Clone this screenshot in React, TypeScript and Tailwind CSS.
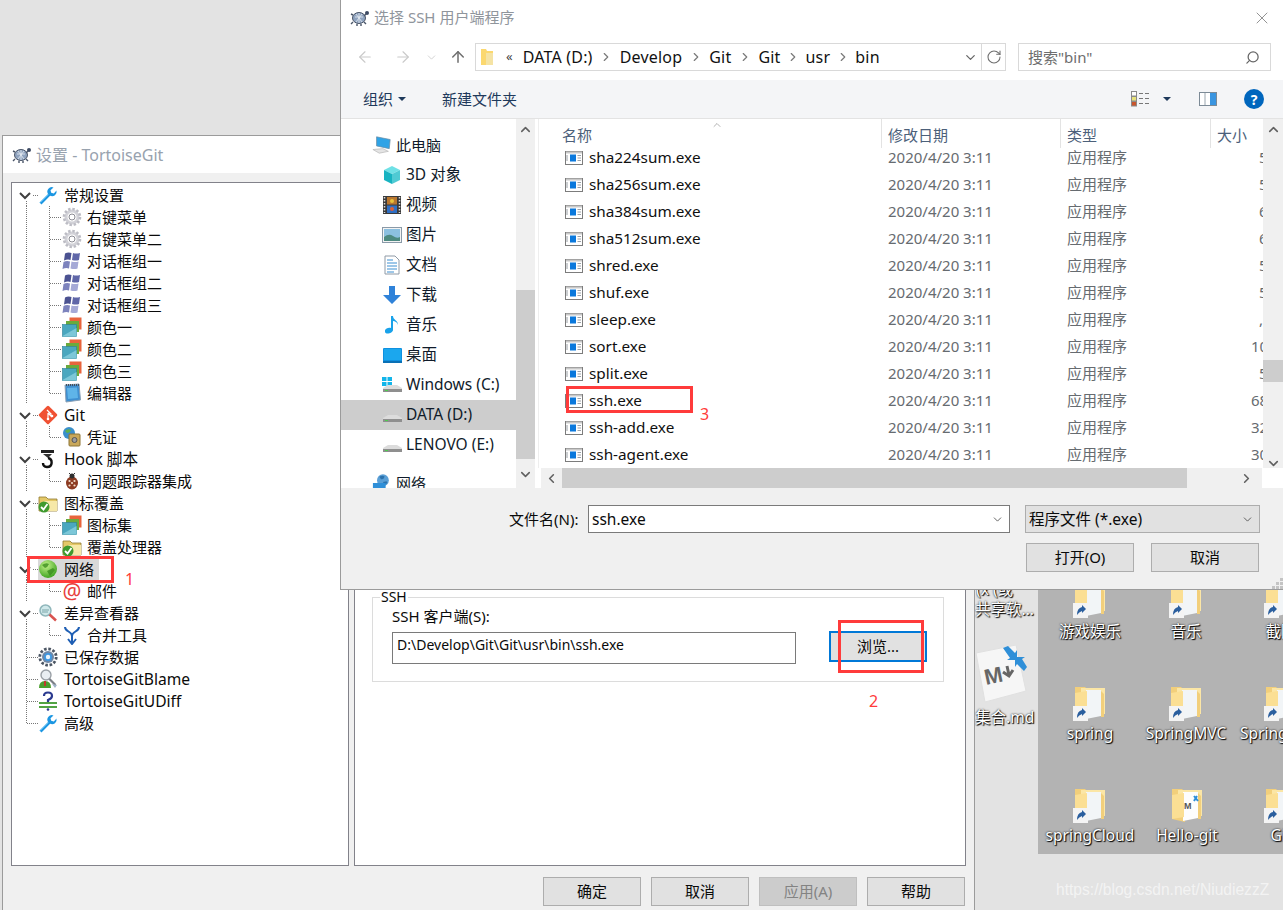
import React from "react";
import { ChevronRight, ChevronDown, ChevronUp, ChevronLeft, ArrowLeft, ArrowRight, ArrowUp, RotateCw, Search, X } from "lucide-react";

const Turtle = () => (
  <svg width="20" height="18" viewBox="0 0 20 18">
    <ellipse cx="9" cy="9" rx="6.5" ry="5.5" fill="#8fa3bf" stroke="#4a5568" />
    <path d="M5 8h8M9 4v10M6 5l6 8M12 5l-6 8" stroke="#e8edf4" strokeWidth=".8" />
    <circle cx="17" cy="4" r="2" fill="#3d4a63" />
    <path d="M14 7l2-2M3 13l-2 2M14 13l2 2M3 6L1 5M7 15v2M11 15v2" stroke="#4a5568" strokeWidth="1.4" />
  </svg>
);

const Wrench = () => (
  <svg width="20" height="20" viewBox="0 0 20 20">
    <path d="M1.500 17.500l8.500-8.500a4.500 4.500 0 0 1 5.500-6.500l-3 2.700.7 2.600 2.600.6 2.700-2.900a4.600 4.600 0 0 1-6.400 5.300L3.500 19.500z" fill="#1b96e2" />
    <path d="M2 17.500L10 9.500" stroke="#9bdcff" />
  </svg>
);
const Gear = () => (
  <svg width="20" height="20" viewBox="0 0 20 20">
    <circle cx="10" cy="10" r="6" fill="none" stroke="#d2d2d8" strokeWidth="3" />
    <circle cx="10" cy="10" r="8" fill="none" stroke="#bcbcc4" strokeWidth="2.6" strokeDasharray="2.4 1.8" />
    <circle cx="10" cy="10" r="3" fill="none" stroke="#8a8a92" />
  </svg>
);
const WinFlag = () => (
  <svg width="20" height="20" viewBox="0 0 20 20">
    <path d="M3 2.500q3-1.500 6.500-.5l-1 7q-3-1-6.500.5z" fill="#4b5291" />
    <path d="M11 2q3 1 7 0l-1 7q-3 1-7 0z" fill="#5f66a8" />
    <path d="M1.500 11q3-1.500 6.500-.5l-1 7q-3-1-6.500.5z" fill="#7d83bd" />
    <path d="M9.500 10.500q3 1 7 0l-1 7q-3 1-7 0z" fill="#a5a9d6" />
  </svg>
);
const Colors = () => (
  <svg width="20" height="20" viewBox="0 0 20 20">
    <rect x="7.500" y=".5" width="12" height="12" fill="#e8643c" />
    <rect x="4" y="4" width="13" height="11" fill="#6aaa3c" />
    <rect x=".5" y="7.500" width="14" height="12" fill="#4aa7bf" stroke="#2c7f96" strokeWidth=".6" />
    <path d="M.5 19l14-8v8.500H.5z" fill="#7cc7d8" />
  </svg>
);
const Notepad = () => (
  <svg width="20" height="20" viewBox="0 0 20 20">
    <path d="M3 2l14-1 1.500 16L4 19z" fill="#3f8fd0" stroke="#8aa0b5" />
    <path d="M5 5l10-.6L16 15 6 16z" fill="#5fb4e8" />
    <path d="M4 2h13" stroke="#44505c" strokeDasharray="1 1" strokeWidth="2" />
  </svg>
);
const GitIcon = () => (
  <svg width="20" height="20" viewBox="0 0 20 20">
    <rect x="3" y="3" width="14" height="14" rx="1.500" transform="rotate(45 10 10)" fill="#f05133" />
    <path d="M9 5l4.500 4.500M10 8v6M10 8l4 4" stroke="#fff" strokeWidth="1.200" />
    <circle cx="10" cy="14" r="1.300" fill="#fff" />
    <circle cx="14" cy="11" r="1.300" fill="#fff" />
  </svg>
);
const Cred = () => (
  <svg width="20" height="20" viewBox="0 0 20 20">
    <circle cx="7" cy="6" r="6" fill="#3a8fcb" />
    <path d="M3 4q3-3 6-1-1 3-4 3zM7 9l3-1 1 2-3 2z" fill="#5fb04c" />
    <rect x="7" y="7" width="11" height="12" rx="1" fill="#c9a85a" stroke="#8d7434" />
    <circle cx="12.500" cy="13" r="2.500" fill="#9c9c9c" stroke="#555" />
  </svg>
);
const Hook = () => (
  <svg width="20" height="20" viewBox="0 0 20 20">
    <rect x="3" y="1" width="13" height="3" fill="#222" />
    <path d="M5 5h9l-4 4z" fill="#333" />
    <path d="M10 9c5 1 5 9-1 9-3 0-4-2-4-4" fill="none" stroke="#111" strokeWidth="2.400" />
  </svg>
);
const Bug = () => (
  <svg width="20" height="20" viewBox="0 0 20 20">
    <ellipse cx="10" cy="12" rx="6" ry="6.500" fill="#8c3b22" />
    <circle cx="10" cy="5" r="2.500" fill="#2f2f2f" />
    <path d="M7 2l2 2M13 2l-2 2" stroke="#333" />
    <circle cx="7.500" cy="10" r="1.100" fill="#f2dcc9" />
    <circle cx="12.500" cy="10" r="1.100" fill="#f2dcc9" />
    <circle cx="7.500" cy="14.500" r="1.100" fill="#f2dcc9" />
    <circle cx="12.500" cy="14.500" r="1.100" fill="#f2dcc9" />
    <circle cx="10" cy="12" r="1.100" fill="#f2dcc9" />
  </svg>
);
const FolderCheck = () => (
  <svg width="20" height="20" viewBox="0 0 20 20">
    <path d="M1 4h7l2 2h9v12H1z" fill="#e4c868" stroke="#8f7a30" strokeWidth=".8" />
    <path d="M6 8h13v10H6z" fill="#f6e8a8" />
    <circle cx="6" cy="14" r="5.500" fill="#3f9a2e" />
    <path d="M3 14l2.500 2.500L9.500 11" stroke="#fff" strokeWidth="1.800" fill="none" />
  </svg>
);
const GlobeGreen = () => (
  <svg width="20" height="20" viewBox="0 0 20 20">
    <defs>
      <radialGradient id="gg" cx=".4" cy=".3" r=".8">
        <stop offset="0" stopColor="#c5f28a" />
        <stop offset="1" stopColor="#2f9a14" />
      </radialGradient>
    </defs>
    <circle cx="10" cy="10" r="9" fill="url(#gg)" />
    <path d="M4 6q4-3 7-1-1 3-4 4zM9 12l6-3 2 2-5 6z" fill="#3b8d1e" opacity=".8" />
  </svg>
);
const Magnifier = () => (
  <svg width="20" height="20" viewBox="0 0 20 20">
    <circle cx="7.500" cy="7.500" r="5.500" fill="#cfe8ea" stroke="#8fb6ba" strokeWidth="1.500" />
    <path d="M4 7h7M4 9h6" stroke="#7aa5a8" />
    <path d="M11.500 11.500l6.500 6" stroke="#d9534f" strokeWidth="2.600" />
  </svg>
);
const MergeY = () => (
  <svg width="20" height="20" viewBox="0 0 20 20">
    <path d="M3 2c0 5 7 4 7 9v7M17 2c0 5-7 4-7 9" fill="none" stroke="#1f5fb4" strokeWidth="2" />
    <path d="M6 14l4 5 4-5" fill="none" stroke="#1f5fb4" strokeWidth="2" />
  </svg>
);
const BlueGear = () => (
  <svg width="20" height="20" viewBox="0 0 20 20">
    <circle cx="10" cy="10" r="8.200" fill="none" stroke="#4b5563" strokeWidth="2.800" strokeDasharray="2.600 1.700" />
    <circle cx="10" cy="10" r="6" fill="#6f87a6" />
    <circle cx="10" cy="10" r="4" fill="#3f97e0" />
    <circle cx="10" cy="10" r="2.200" fill="#eaf4fc" />
  </svg>
);
const Blame = () => (
  <svg width="20" height="20" viewBox="0 0 20 20">
    <path d="M1 19q0-7 6-7 6 0 6 7z" fill="#4aa02c" />
    <rect x="6" y="12" width="2" height="5" fill="#c0392b" />
    <circle cx="8" cy="6" r="5" fill="#e9eef2" stroke="#9aa0a6" strokeWidth="1.400" />
    <path d="M11.500 10l6 6" stroke="#7a7f86" strokeWidth="2.200" />
    <path d="M14 15l5 1-2 3z" fill="#9fb3c8" />
  </svg>
);
const UDiff = () => (
  <svg width="20" height="20" viewBox="0 0 20 20">
    <path d="M6 5q0-3.500 4-3.500T14 5q0 2.500-4 4v2.500" fill="none" stroke="#2b3a8f" strokeWidth="2.200" />
    <path d="M1 12h18" stroke="#3f9a2e" strokeWidth="1.800" />
    <path d="M1 16h18" stroke="#3f9a2e" strokeWidth="1.800" />
    <circle cx="10" cy="18.500" r="1.300" fill="#2b3a8f" />
  </svg>
);

const AtSign = () => <span className="w-[20px] text-center text-[21px] leading-[20px] text-[#e8403c]">@</span>;

const icons: Record<string, React.ReactNode> = {
  wrench: <Wrench />, gear: <Gear />, win: <WinFlag />, colors: <Colors />, note: <Notepad />,
  git: <GitIcon />, cred: <Cred />, hook: <Hook />, bug: <Bug />, folder: <FolderCheck />,
  globe: <GlobeGreen />, at: <AtSign />, mag: <Magnifier />, merge: <MergeY />, bgear: <BlueGear />,
  blame: <Blame />, udiff: <UDiff />,
};

type Row = { l: 0 | 1; i: string; t: string; c?: boolean; last?: boolean; end?: boolean; sel?: boolean };
const rows: Row[] = [
  { l: 0, i: "wrench", t: "常规设置", c: true },
  { l: 1, i: "gear", t: "右键菜单" },
  { l: 1, i: "gear", t: "右键菜单二" },
  { l: 1, i: "win", t: "对话框组一" },
  { l: 1, i: "win", t: "对话框组二" },
  { l: 1, i: "win", t: "对话框组三" },
  { l: 1, i: "colors", t: "颜色一" },
  { l: 1, i: "colors", t: "颜色二" },
  { l: 1, i: "colors", t: "颜色三" },
  { l: 1, i: "note", t: "编辑器", last: true },
  { l: 0, i: "git", t: "Git", c: true },
  { l: 1, i: "cred", t: "凭证", last: true },
  { l: 0, i: "hook", t: "Hook 脚本", c: true },
  { l: 1, i: "bug", t: "问题跟踪器集成", last: true },
  { l: 0, i: "folder", t: "图标覆盖", c: true },
  { l: 1, i: "colors", t: "图标集" },
  { l: 1, i: "folder", t: "覆盖处理器", last: true },
  { l: 0, i: "globe", t: "网络", c: true, sel: true },
  { l: 1, i: "at", t: "邮件", last: true },
  { l: 0, i: "mag", t: "差异查看器", c: true },
  { l: 1, i: "merge", t: "合并工具", last: true },
  { l: 0, i: "bgear", t: "已保存数据" },
  { l: 0, i: "blame", t: "TortoiseGitBlame" },
  { l: 0, i: "udiff", t: "TortoiseGitUDiff" },
  { l: 0, i: "wrench", t: "高级", end: true },
];

const Guide = ({ r }: { r: Row }) => {
  const w = r.l === 0 ? 26 : 50;
  const dot = { stroke: "#777", strokeDasharray: "1 1", strokeWidth: 1 };
  return (
    <svg width={w} height="22" className="shrink-0">
      {r.l === 1 && (
        <>
          <path d="M14.500 0V22" {...dot} />
          <path d={r.last ? "M37.500 0V11" : "M37.500 0V22"} {...dot} />
          <path d="M38 11.500H50" {...dot} />
        </>
      )}
      {r.l === 0 && r.c && (
        <>
          <path d="M14.500 17V22" {...dot} />
          <path d="M21 11.500H26" {...dot} />
          <path d="M8 9l5 5 5-5" fill="none" stroke="#404040" strokeWidth="2" />
        </>
      )}
      {r.l === 0 && !r.c && (
        <>
          <path d={r.end ? "M14.500 0V11" : "M14.500 0V22"} {...dot} />
          <path d="M15 11.500H26" {...dot} />
        </>
      )}
    </svg>
  );
};

const TreeRow = ({ r }: { r: Row }) => (
  <div className="flex h-[22px] items-center">
    <Guide r={r} />
    <div className={`flex h-[22px] items-center ${r.l === 0 ? "gap-[6px]" : "gap-[5px]"} ${r.sel ? "bg-[#d9d9d9] pr-[5px]" : ""}`}>
      <span className="flex h-[20px] w-[20px] shrink-0 items-center justify-center">{icons[r.i]}</span>
      <span className={`whitespace-nowrap leading-[22px] text-[#0a0a0a] ${/[A-Za-z]/.test(r.t) ? "text-[15.6px]" : "text-[15px]"}`}>{r.t}</span>
    </div>
  </div>
);

const WinBtn = ({ children, dim }: { children: React.ReactNode; dim?: boolean }) => (
  <div className={`flex h-[29px] w-[98px] items-center justify-center border text-[15px] ${dim ? "border-[#bfbfbf] bg-[#cccccc] text-[#838383]" : "border-[#adadad] bg-[#e1e1e1] text-[#0a0a0a]"}`}>
    {children}
  </div>
);

const SettingsWindow = () => (
  <div className="absolute left-[2px] top-[135px] flex h-[775px] w-[973px] flex-col border-x border-t border-[#9b9b9b] bg-[#f0f0f0]">
    <div className="flex h-[37px] items-center gap-[4px] bg-white pl-[9px]">
      <Turtle />
      <span className="text-[16px] text-[#98a2ae]">设置 - TortoiseGit</span>
    </div>
    <div className="flex gap-[5px] pl-[8px] pt-[9px]">
      <div className="h-[684px] w-[338px] border border-[#82828a] bg-white pl-0 pt-[1px]">
        {rows.map((r) => <TreeRow key={r.t + r.i} r={r} />)}
      </div>
      <div className="h-[684px] w-[612px] border border-[#82828a] bg-white pl-[17px] pt-[414px]">
        <div className="relative h-[85px] w-[572px] border border-[#dcdcdc]">
          <span className="absolute left-[7px] top-[-10px] bg-white px-[1px] text-[14px] leading-[18px] text-[#0a0a0a]">SSH</span>
          <div className="pl-[19px] pt-[9px] text-[15px] leading-[18px] text-[#0a0a0a]">SSH 客户端(S):</div>
          <div className="flex items-start pl-[19px] pt-[7px]">
            <div className="h-[32px] w-[404px] border border-[#7a7a7a] pl-[4px] text-[14px] leading-[24px] text-[#0a0a0a]">D:\Develop\Git\Git\usr\bin\ssh.exe</div>
            <div className="ml-[33px] mt-[-1px] flex h-[31px] w-[98px] items-center justify-center border-[2px] border-[#0078d7] bg-[#e1e1e1] text-[15px] text-[#0a0a0a]">浏览...</div>
          </div>
        </div>
      </div>
    </div>
    <div className="mr-[9px] mt-[11px] flex justify-end gap-[10px]">
      <WinBtn>确定</WinBtn>
      <WinBtn>取消</WinBtn>
      <WinBtn dim>应用(A)</WinBtn>
      <WinBtn>帮助</WinBtn>
    </div>
  </div>
);

const Monitor = () => (
  <svg width="22" height="20" viewBox="0 0 22 20">
    <path d="M5 1l15 3-1 10-14-3z" fill="#2fa3e6" stroke="#6c8ea6" strokeWidth=".8" />
    <path d="M1 15l11-1 6 3-10 2z" fill="#e4e4e4" stroke="#b9b9b9" strokeWidth=".8" />
  </svg>
);
const Cube = () => (
  <svg width="20" height="20" viewBox="0 0 20 20">
    <path d="M10 1l8 4-8 4-8-4z" fill="#6fe1e6" />
    <path d="M2 5l8 4v10l-8-4z" fill="#17b3c1" />
    <path d="M18 5l-8 4v10l8-4z" fill="#4fcad3" />
  </svg>
);
const Film = () => (
  <svg width="20" height="20" viewBox="0 0 20 20">
    <rect x="1" y="1" width="18" height="18" fill="#3a3a3a" />
    <path d="M2.500 2v16M17.500 2v16" stroke="#ddd" strokeWidth="1.500" strokeDasharray="1.500 1.500" />
    <rect x="5" y="2" width="10" height="7.500" fill="#b9772f" />
    <rect x="5" y="10.500" width="10" height="7.500" fill="#2f6fc4" />
    <circle cx="10" cy="6" r="2" fill="#e8c23a" />
    <circle cx="10" cy="14" r="2" fill="#d85f3a" />
  </svg>
);
const Pic = () => (
  <svg width="20" height="16" viewBox="0 0 20 16">
    <rect x=".5" y=".5" width="19" height="15" fill="#f3f3f3" stroke="#8a9aa8" />
    <rect x="2" y="2" width="16" height="12" fill="#8cc0e0" />
    <path d="M2 10q5-4 9-1t7 1v4H2z" fill="#4d8a80" />
  </svg>
);
const Doc = () => (
  <svg width="16" height="20" viewBox="0 0 16 20">
    <path d="M1 1h10l4 4v14H1z" fill="#fff" stroke="#8f9aa6" />
    <path d="M3 5h6M3 8h10M3 11h10M3 14h10M3 17h7" stroke="#3d8fd1" />
  </svg>
);
const DownArrow = () => (
  <svg width="18" height="18" viewBox="0 0 18 18"><path d="M6 0h6v9h6l-9 9-9-9h6z" fill="#2f82d9" /></svg>
);
const Music = () => (
  <svg width="14" height="20" viewBox="0 0 14 20">
    <path d="M6 1h2c0 4 5 4 5 9-1-3-3-4-5-4v9c0 3-7 5-8 2s3-5 6-4z" fill="#19a2ea" />
  </svg>
);
const Desk = () => (
  <svg width="19" height="15" viewBox="0 0 19 15">
    <rect x="0" y="0" width="19" height="15" rx="1" fill="#0f91e0" />
    <rect x="1" y="1" width="17" height="11" fill="#1ba7ee" />
    <rect x="0" y="13" width="19" height="2" fill="#0a70b5" />
  </svg>
);
const Drive = ({ win }: { win?: boolean }) => (
  <svg width="20" height="16" viewBox="0 0 20 16">
    {win && (
      <>
        <rect x="0" y="0" width="4.500" height="4" fill="#12b5ea" />
        <rect x="5.500" y="0" width="4.500" height="4" fill="#12b5ea" />
        <rect x="0" y="5" width="4.500" height="4" fill="#12b5ea" />
        <rect x="5.500" y="5" width="4.500" height="4" fill="#12b5ea" />
      </>
    )}
    <path d="M1 11l5-3h9l5 3v3H1z" fill="#dcdcdc" />
    <path d="M1 12h19v3H1z" fill="#8f8f8f" />
    <rect x="3" y="13" width="3" height="1" fill="#4ecb4e" />
  </svg>
);
const NetGlobe = () => (
  <svg width="22" height="20" viewBox="0 0 22 20">
    <circle cx="12" cy="7" r="6.500" fill="#5a9fd6" />
    <path d="M8 3q4-2 6 0-1 3-4 3zM12 9l4-1 1 2-3 2z" fill="#2b72ad" />
    <rect x="1" y="10" width="14" height="9" fill="#2f8fd8" />
  </svg>
);

type NavItem = { i: React.ReactNode; t: string; lvl?: boolean; sel?: boolean };
const navs: NavItem[] = [
  { i: <Cube />, t: "3D 对象" },
  { i: <Film />, t: "视频" },
  { i: <Pic />, t: "图片" },
  { i: <Doc />, t: "文档" },
  { i: <DownArrow />, t: "下载" },
  { i: <Music />, t: "音乐" },
  { i: <Desk />, t: "桌面" },
  { i: <Drive win />, t: "Windows (C:)" },
  { i: <Drive />, t: "DATA (D:)", sel: true },
  { i: <Drive />, t: "LENOVO (E:)" },
];

const NavRow = ({ n }: { n: NavItem }) => (
  <div className={`flex h-[30px] shrink-0 items-center pl-[41px] ${n.sel ? "bg-[#cdcdcd]" : ""}`}>
    <span className="flex w-[20px] shrink-0 items-center justify-center">{n.i}</span>
    <span className="ml-[4px] whitespace-nowrap text-[15.500px] text-[#101b2a]">{n.t}</span>
  </div>
);

const ExeIcon = () => (
  <svg width="18" height="14" viewBox="0 0 18 14" className="shrink-0">
    <rect x=".5" y=".5" width="17" height="13" fill="#fff" stroke="#7c7c7c" />
    <path d="M1 1.500h16" stroke="#c8c8c8" strokeWidth="2" />
    <rect x="5" y="3.500" width="6" height="7" fill="#0a78dc" />
    <path d="M2 4v6M12.500 4.500h3.500M12.500 7h3.500M12.500 9.500h3.500" stroke="#9aa0a6" />
  </svg>
);

const files: [string, string, number][] = [
  ["sha224sum.exe", "5", 50],
  ["sha256sum.exe", "5", 50],
  ["sha384sum.exe", "6", 50],
  ["sha512sum.exe", "6", 50],
  ["shred.exe", "5", 50],
  ["shuf.exe", "5", 50],
  ["sleep.exe", ",", 50],
  ["sort.exe", "10", 42],
  ["split.exe", "5", 50],
  ["ssh.exe", "68", 42],
  ["ssh-add.exe", "32", 42],
  ["ssh-agent.exe", "30", 42],
];

const FileRow = ({ f }: { f: [string, string, number] }) => (
  <div className="flex h-[27px] shrink-0 items-center text-[15px]">
    <div className="flex w-[340px] items-center pl-[24px]">
      <ExeIcon />
      <span className="ml-[6px] text-[15.300px] text-[#101010]">{f[0]}</span>
    </div>
    <div className="w-[179px] pl-[7px] text-[#666b70]">2020/4/20 3:11</div>
    <div className="w-[150px] pl-[7px] text-[#666b70]">应用程序</div>
    <div className="h-[27px] w-[53px] overflow-hidden whitespace-nowrap leading-[27px] text-[#666b70]">
      <span className={f[2] === 50 ? "ml-[49px]" : "ml-[41px]"}>{f[1]}</span>
    </div>
  </div>
);

const Crumb = ({ t }: { t: string }) => <span className="text-[16px] tracking-[0.2px] text-[#111]">{t}</span>;
const Sep = () => <ChevronRight size={14} strokeWidth={2} className="mx-[6.500px] text-[#7a7a7a]" />;
const TightSep = () => <ChevronRight size={14} strokeWidth={2} className="mx-[5.500px] text-[#7a7a7a]" />;

const FileDialog = () => (
  <div className="absolute left-[340px] top-0 flex h-[590px] w-[943px] flex-col border-b border-l border-[#9b9b9b] bg-white">
    <div className="flex h-[40px] shrink-0 items-center pb-[5px] pl-[9px] pr-[11px]">
      <Turtle />
      <span className="ml-[4px] text-[15px] text-[#8f959c]">选择 SSH 用户端程序</span>
      <X size={20} strokeWidth={1} className="ml-auto text-[#7d7d7d]" />
    </div>
    <div className="flex h-[40px] shrink-0 items-start pt-[3px]">
      <div className="flex h-[28px] w-[134px] items-center text-[#c9c9c9]">
        <ArrowLeft size={18} strokeWidth={1.500} className="ml-[15px]" />
        <ArrowRight size={18} strokeWidth={1.500} className="ml-[20px]" />
        <ChevronDown size={13} strokeWidth={1.500} className="ml-[13px]" />
        <ArrowUp size={18} strokeWidth={2} className="ml-[11px] text-[#6e6e6e]" />
      </div>
      <div className="flex h-[28px] w-[531px] items-center border border-[#d9d9d9]">
        <svg width="14" height="18" viewBox="0 0 14 18" className="ml-[5px] shrink-0">
          <path d="M0 1h5l1 2h6v14H0z" fill="#fbd86f" />
          <path d="M5 5h7v12H5z" fill="#f5e3a4" />
        </svg>
        <span className="ml-[11px] mr-[10px] text-[13px] text-[#444]">«</span>
        <Crumb t="DATA (D:)" /><Sep />
        <Crumb t="Develop" /><Sep />
        <Crumb t="Git" /><Sep />
        <Crumb t="Git" /><TightSep />
        <Crumb t="usr" /><TightSep />
        <Crumb t="bin" />
        <ChevronDown size={15} strokeWidth={2} className="ml-auto mr-[3px] text-[#666]" />
        <div className="flex h-[26px] w-[24px] shrink-0 items-center justify-center border-l border-[#d9d9d9]">
          <RotateCw size={16} strokeWidth={1.600} className="text-[#6e6e6e]" />
        </div>
      </div>
      <div className="ml-[12px] flex h-[28px] w-[253px] items-center justify-between border border-[#d9d9d9] pl-[9px] pr-[10px]">
        <span className="text-[15px] text-[#6d6d6d]">搜索"bin"</span>
        <Search size={15} strokeWidth={2} className="-scale-x-100 text-[#666]" />
      </div>
    </div>
    <div className="flex h-[39px] shrink-0 items-center border-b border-[#e3e3e3] bg-[#f4f5f7] pl-[22px] text-[#1e395b]">
      <span className="text-[15px]">组织</span>
      <span className="ml-[5px] h-0 w-0 border-x-[4px] border-t-[4px] border-x-transparent border-t-[#1e395b]" />
      <span className="ml-[36px] text-[15px]">新建文件夹</span>
      <svg width="19" height="16" viewBox="0 0 19 16" className="ml-auto">
        <rect x=".5" y=".5" width="5" height="4.500" fill="#fff" stroke="#8a8a8a" />
        <rect x=".5" y="5.500" width="5" height="4.500" fill="#e7e27a" stroke="#8a8a8a" />
        <rect x=".5" y="10.500" width="5" height="4.500" fill="#c8552d" stroke="#8a8a8a" />
        <path d="M8 2.500h4M14 2.500h4M8 7.500h4M14 7.500h4M8 12.500h4M14 12.500h4" stroke="#777" />
      </svg>
      <span className="ml-[13px] h-0 w-0 border-x-[4px] border-t-[4px] border-x-transparent border-t-[#1e395b]" />
      <svg width="18" height="14" viewBox="0 0 18 14" className="ml-[28px]">
        <rect x=".5" y=".5" width="17" height="13" fill="#fff" stroke="#7c8a96" />
        <rect x="11" y="1" width="6" height="12" fill="#3a95e0" />
        <path d="M6 1v12" stroke="#9aa5ae" />
      </svg>
      <div className="ml-[27px] mr-[19px] flex h-[20px] w-[20px] items-center justify-center rounded-full bg-[#0066bd] text-[14px] font-bold text-white">?</div>
    </div>
    <div className="flex h-[369px] shrink-0">
      <div className="flex w-[175px] shrink-0 flex-col overflow-hidden pt-[11px]">
        <div className="flex h-[30px] shrink-0 items-center pl-[31px]">
          <span className="flex w-[20px] shrink-0 items-center justify-center"><Monitor /></span>
          <span className="ml-[4px] text-[15px] text-[#101b2a]">此电脑</span>
        </div>
        {navs.map((n) => <NavRow key={n.t} n={n} />)}
        <div className="mt-[8px] flex h-[30px] shrink-0 items-center pl-[31px]">
          <span className="flex w-[20px] shrink-0 items-center justify-center"><NetGlobe /></span>
          <span className="ml-[4px] text-[15px] text-[#101b2a]">网络</span>
        </div>
      </div>
      <div className="flex w-[19px] shrink-0 flex-col items-center bg-[#f0f0f0]">
        <div className="flex h-[20px] items-center"><ChevronUp size={15} strokeWidth={2.500} className="text-[#606060]" /></div>
        <div className="mt-[151px] h-[169px] w-full bg-[#cdcdcd]" />
        <div className="mt-[1px] flex h-[28px] items-center"><ChevronDown size={15} strokeWidth={2.500} className="text-[#606060]" /></div>
      </div>
      <div className="flex w-[6px] shrink-0 justify-center"><div className="h-[349px] w-px bg-[#eeeeee]" /></div>
      <div className="flex w-[742px] flex-col">
        <div className="flex h-[349px]">
          <div className="flex w-[722px] flex-col overflow-hidden">
            <div className="relative z-10 flex h-[29px] shrink-0 items-center bg-white text-[15px] text-[#4c607a]">
              <div className="h-[29px] w-[340px] pl-[21px] leading-[32px]">名称</div>
              <div className="h-[29px] w-[179px] border-l border-[#e3e3e3] pl-[6px] leading-[32px]">修改日期</div>
              <div className="h-[29px] w-[150px] border-l border-[#e3e3e3] pl-[6px] leading-[32px]">类型</div>
              <div className="h-[29px] w-[53px] border-l border-[#e3e3e3] pl-[6px] leading-[32px]">大小</div>
              <ChevronUp size={12} strokeWidth={1} className="absolute left-[170px] top-0 text-[#666]" />
            </div>
            <div className="mt-[-4px] flex flex-col">
              {files.map((f) => <FileRow key={f[0]} f={f} />)}
            </div>
          </div>
          <div className="flex w-[20px] shrink-0 flex-col items-center bg-[#f0f0f0]">
            <div className="flex h-[20px] items-center"><ChevronUp size={15} strokeWidth={2.500} className="text-[#606060]" /></div>
            <div className="mt-[221px] h-[22px] w-full bg-[#cdcdcd]" />
            <div className="mt-[76px] flex h-[10px] items-center"><ChevronDown size={15} strokeWidth={2.500} className="text-[#606060]" /></div>
          </div>
        </div>
        <div className="flex h-[20px]">
          <div className="flex w-[721px] items-center bg-[#f0f0f0]">
            <div className="flex h-[20px] w-[21px] items-center justify-center"><ChevronLeft size={15} strokeWidth={2.500} className="text-[#606060]" /></div>
            <div className="h-[20px] w-[625px] bg-[#cdcdcd]" />
            <ChevronRight size={15} strokeWidth={2.500} className="ml-[52px] text-[#606060]" />
          </div>
        </div>
      </div>
    </div>
    <div className="flex flex-1 flex-col bg-[#f0f0f0]">
      <div className="mt-[17px] flex h-[28px] items-center">
        <span className="ml-[168px] w-[72px] whitespace-nowrap text-[15px] text-[#0a0a0a]">文件名(N):</span>
        <div className="ml-[7px] flex h-[28px] w-[422px] items-center border border-[#7a7a7a] bg-white pl-[3px] pt-[1px] text-[15.500px] text-[#0a0a0a]">
          ssh.exe
          <ChevronDown size={13} strokeWidth={1.500} className="ml-auto mr-[5px] text-[#444]" />
        </div>
        <div className="ml-[15px] flex h-[28px] w-[235px] items-center border border-[#adadad] bg-[#e1e1e1] pl-[3px] pt-[1px] text-[15.500px] text-[#0a0a0a]">
          程序文件 (*.exe)
          <ChevronDown size={13} strokeWidth={1.500} className="ml-auto mr-[5px] text-[#444]" />
        </div>
      </div>
      <div className="mt-[10px] flex">
        <div className="ml-[685px] flex h-[29px] w-[108px] items-center justify-center border border-[#adadad] bg-[#e1e1e1] text-[15px] text-[#0a0a0a]">打开(O)</div>
        <div className="ml-[17px] flex h-[29px] w-[108px] items-center justify-center border border-[#adadad] bg-[#e1e1e1] text-[15px] text-[#0a0a0a]">取消</div>
      </div>
    </div>
    <svg width="11" height="11" viewBox="0 0 11 11" className="absolute bottom-0 right-0">
      <path d="M8 0h3v3H8zM4 4h3v3H4zM8 4h3v3H8zM0 8h3v3H0zM4 8h3v3H4zM8 8h3v3H8z" fill="#c4c4c4" />
    </svg>
  </div>
);

const DeskFolder = ({ md }: { md?: boolean }) => (
  <svg width="34" height="36" viewBox="0 0 34 36" className="mx-auto">
    <path d="M2 32V2l10 0 3 3v30z" fill="#f2cf7b" />
    <path d="M8 3h24v26H8z" fill="#fbe6a6" />
    <path d="M13 5h15v26l-15 3z" fill={md ? "#fdfdfd" : "#f2f5f7"} />
    <path d="M2 32l12-2V6l-12 2z" fill="#fbdf94" />
    <path d="M28 6v26h3V9z" fill="#f2cf7b" />
    {!md && <rect x="0" y="21" width="15" height="15" fill="#f4f4f4" />}
    {!md && <path d="M4 33q0-7 5-8v-2l4 4-4 4v-2q-3 1-5 4z" fill="#2b5f9e" />}
    {md && <text x="14" y="22" fontSize="9" fontWeight="700" fill="#555" fontFamily="Liberation Sans">M</text>}
    {md && <path d="M24 9l4 5M27 9l-3 5" stroke="#2f8fd8" strokeWidth="2" />}
  </svg>
);

const shadow = "[text-shadow:1px_1px_1px_#000,0_0_2px_#000] text-white text-[15.500px] leading-[20px] whitespace-nowrap";

const Desktop = () => (
  <>
    <div className="absolute bottom-[56px] left-[1038px] h-[264px] w-[245px] bg-[#b3b3b3]" />
    <div className={`absolute left-[976px] top-[579px] w-[62px] overflow-hidden ${shadow}`}>(x (或</div>
    <div className={`absolute left-[975px] top-[599px] w-[62px] overflow-hidden ${shadow}`}>共享软...</div>
    <svg width="54" height="60" viewBox="0 0 54 60" className="absolute left-[975px] top-[645px]">
      <path d="M1 8L41 0l10 46-41 11z" fill="#f6f6f6" stroke="#e0e0e0" />
      <text x="9" y="38" fontSize="22" fontWeight="700" fill="#666" fontFamily="Liberation Sans" transform="rotate(-12 20 30)">M</text>
      <path d="M32 21l2 9M28 27l6 4 4-6" fill="none" stroke="#666" strokeWidth="3" />
      <path d="M28 3l5-2 7 7 2-3 0 10-10 0 3-2z" fill="#2f8fd8" />
      <path d="M52 22l-3 4-7-7-2 3 0-10 10 0-3 2z" fill="#2f8fd8" />
    </svg>
    <div className={`absolute left-[975px] top-[707px] ${shadow}`}>集合.md</div>

    <div className="absolute left-[1040px] top-[582px] w-[100px] text-center"><DeskFolder /><div className={`mt-[3px] ${shadow}`}>游戏娱乐</div></div>
    <div className="absolute left-[1136px] top-[582px] w-[100px] text-center"><DeskFolder /><div className={`mt-[3px] ${shadow}`}>音乐</div></div>
    <div className="absolute left-[1231px] top-[582px] w-[100px] text-center"><DeskFolder /><div className={`mt-[3px] ${shadow}`}>截图</div></div>
    <div className="absolute left-[1040px] top-[685px] w-[100px] text-center"><DeskFolder /><div className={`mt-[2px] ${shadow}`}>spring</div></div>
    <div className="absolute left-[1136px] top-[685px] w-[100px] text-center"><DeskFolder /><div className={`mt-[2px] ${shadow}`}>SpringMVC</div></div>
    <div className="absolute left-[1231px] top-[685px] w-[100px] text-center"><DeskFolder /><div className={`mt-[2px] ${shadow}`}>SpringBoot</div></div>
    <div className="absolute left-[1040px] top-[787px] w-[100px] text-center"><DeskFolder /><div className={`mt-[2px] ${shadow}`}>springCloud</div></div>
    <div className="absolute left-[1137px] top-[787px] w-[100px] text-center"><DeskFolder md /><div className={`mt-[2px] ${shadow}`}>Hello-git</div></div>
    <div className="absolute left-[1231px] top-[787px] w-[100px] text-center"><DeskFolder /><div className={`mt-[2px] ${shadow}`}>Git</div></div>
    <div className="absolute left-[1056px] top-[879px] whitespace-nowrap font-['Liberation_Sans',sans-serif] text-[15.600px] leading-[22px] text-white/60">https://blog.csdn.net/NiudiezzZ</div>
  </>
);

const Annotations = () => (
  <>
    <div className="absolute left-[27px] top-[556px] h-[27px] w-[87px] border-[3px] border-[#ff3b3b]" />
    <span className="absolute left-[125px] top-[569px] text-[16px] leading-[20px] text-[#ff3b3b]">1</span>
    <div className="absolute left-[838px] top-[620px] h-[53px] w-[86px] border-[3px] border-[#ff3b3b]" />
    <span className="absolute left-[869px] top-[691px] text-[16px] leading-[20px] text-[#ff3b3b]">2</span>
    <div className="absolute left-[566px] top-[386px] h-[27px] w-[127px] border-[3px] border-[#ff3b3b]" />
    <span className="absolute left-[700px] top-[404px] text-[16px] leading-[20px] text-[#ff3b3b]">3</span>
  </>
);

export default function App() {
  return (
    <div className="relative h-[910px] w-[1283px] overflow-hidden bg-[#e3e3e3] font-['Noto_Sans','Noto_Sans_CJK_SC',sans-serif]">
      <Desktop />
      <SettingsWindow />
      <FileDialog />
      <Annotations />
    </div>
  );
}
